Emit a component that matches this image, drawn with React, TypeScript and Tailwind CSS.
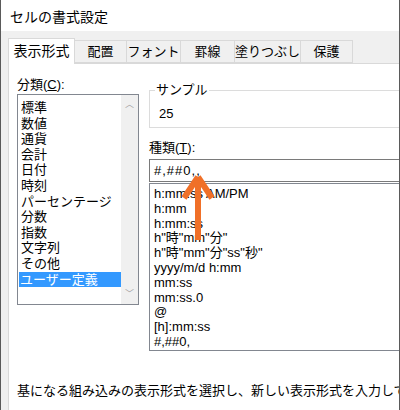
const font = { fontFamily: '"Liberation Sans", "Noto Sans CJK JP", sans-serif' };

const categories = ["標準", "数値", "通貨", "会計", "日付", "時刻", "パーセンテージ", "分数", "指数", "文字列", "その他", "ユーザー定義"];
const formats = ["h:mm:ss AM/PM", "h:mm", "h:mm:ss", 'h"時"mm"分"', 'h"時"mm"分"ss"秒"', "yyyy/m/d h:mm", "mm:ss", "mm:ss.0", "@", "[h]:mm:ss", "#,##0,"];
const tabs = ["配置", "フォント", "罫線", "塗りつぶし", "保護"];
const tabW = ["w-[52px]", "w-[54px]", "w-[54px]", "w-[66px]", "w-[52px]"];

export default function App() {
  return (
    <div className="relative w-[400px] h-[410px] overflow-hidden bg-[#f0f0f0] text-[13px] text-black border-x border-[#5a5a5a]" style={font}>
      <div className="h-[31px] bg-white pl-[9px] pt-[7px] text-[14px]">セルの書式設定</div>
      <div className="flex pl-[7px] h-[32px] items-end whitespace-nowrap">
        <div className="w-[67px] h-[26px] shrink-0 bg-white border border-b-0 border-[#d9d9d9] flex items-center justify-center text-[14px] -mb-px relative z-10">表示形式</div>
        {tabs.map((t, i) => (
          <div key={t} className={`${tabW[i]} shrink-0 h-[23px] bg-[#f0f0f0] border border-l-0 border-[#d9d9d9] flex items-center justify-center`}>{t}</div>
        ))}
      </div>
      <div className="bg-white border-t border-l border-[#d9d9d9] ml-[7px] h-[360px] pl-[8px] pt-[11px] relative">
        <div className="flex gap-[10px]">
          <div>
            <div className="h-[19px]">分類(<u>C</u>):</div>
            <div className="w-[122px] h-[211px] border border-[#828790] flex">
              <div className="flex-1 pt-[5px] pl-[2px] leading-[15.6px]">
                {categories.map((c) => (
                  <div key={c} className={c === "ユーザー定義" ? "bg-[#3399ff] text-white pl-[1px] -ml-[1px]" : "pl-[1px]"}>{c}</div>
                ))}
              </div>
              <div className="w-[17px] bg-[#f0f0f0] flex flex-col justify-between items-center text-[#a0a0a0] text-[9px] py-[3px]">
                <span>︿</span><span>﹀</span>
              </div>
            </div>
          </div>
          <div className="flex-1 pt-[8px]">
            <div className="relative border border-[#dcdcdc] border-r-0 h-[38px] mt-[7px]">
              <span className="absolute -top-[11px] left-[5px] bg-white px-[1px]">サンプル</span>
              <div className="pl-[9px] pt-[13px]">25</div>
            </div>
            <div className="mt-[10px] h-[18px]">種類(<u>T</u>):</div>
            <div className="h-[23px] border border-[#7a7a7a] border-r-0 pl-[4px] flex items-center mt-[3px] tracking-[1px]">#,##0,,</div>
            <div className="h-[168px] border border-[#828790] border-r-0 mt-[1px] pl-[4px] pt-[3px] leading-[14.8px]">
              {formats.map((f) => <div key={f}>{f}</div>)}
            </div>
          </div>
        </div>
        <div className="mt-[30px] text-[13px] whitespace-nowrap">基になる組み込みの表示形式を選択し、新しい表示形式を入力してください。</div>
      </div>
      <svg className="absolute left-[178px] top-[174px]" width="38" height="68" viewBox="0 0 38 68">
        <path d="M19 3 L5 24 M19 3 L33 24 M19 4 L19 66" stroke="#f07028" strokeWidth="6" fill="none" strokeLinecap="butt" />
      </svg>
    </div>
  );
}
